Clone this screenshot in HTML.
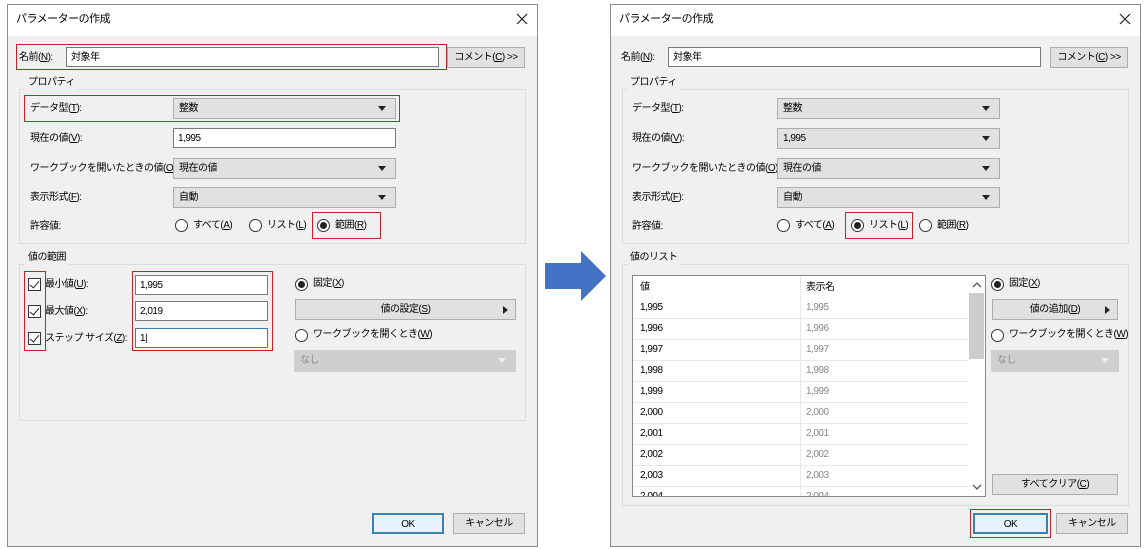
<!DOCTYPE html>
<html><head><meta charset="utf-8"><style>
*{box-sizing:border-box;margin:0;padding:0}
body{width:1148px;height:549px;background:#fff;position:relative;overflow:hidden;font-family:"Liberation Sans","Noto Sans CJK JP",sans-serif;font-size:10px;letter-spacing:-0.5px;color:#000}
.a{position:absolute}
.dlg{position:absolute;border:1px solid #8a8a8a;background:#f0f0f0}
.tb{position:absolute;left:0;top:0;right:0;height:31px;background:#fff}
.t{position:absolute;white-space:nowrap;line-height:14px}
.inp{position:absolute;background:#fff;border:1px solid #7a7a7a;height:20px;padding-left:4px;line-height:20px;white-space:nowrap}
.sel{position:absolute;background:#e1e1e1;border:1px solid #adadad;height:21px;padding-left:5px;line-height:20px;white-space:nowrap}
.sel:after{content:"";position:absolute;right:9px;top:7px;border-left:4px solid transparent;border-right:4px solid transparent;border-top:5px solid #222}
.dis{background:#cfcfcf;border-color:#cfcfcf;color:#8c8c8c}
.dis:after{border-top-color:#eee}
.btn{position:absolute;background:#e1e1e1;border:1px solid #adadad;height:21px;text-align:center;line-height:20px;white-space:nowrap}
.ar:after{content:"";position:absolute;right:7px;top:6px;border-top:4px solid transparent;border-bottom:4px solid transparent;border-left:5px solid #222}
.fs{position:absolute;border:1px solid #dcdcdc}
.lg{position:absolute;background:#f0f0f0;padding:0 3px;line-height:14px;white-space:nowrap}
.red{position:absolute;border:1px solid #c0232b}
.rad{position:absolute;width:13px;height:13px;border:1px solid #333;border-radius:50%;background:#fff}
.rad.on:after{content:"";position:absolute;left:2px;top:2px;width:7px;height:7px;border-radius:50%;background:#222}
.cb{position:absolute;width:13px;height:13px;border:1px solid #333;background:#fff}
.cb:after{content:"";position:absolute;left:3px;top:0px;width:4px;height:8px;border-right:1.3px solid #222;border-bottom:1.3px solid #222;transform:rotate(40deg)}
u{text-decoration:underline}
.row{position:absolute;left:0;width:335px;height:21px;border-bottom:1px solid #e8e8e8}
.row span{position:absolute;top:4px}
.ttl{font-size:11px}
</style></head><body>

<div class="dlg" style="left:7px;top:4px;width:531px;height:543px"><div class="tb"></div></div>
<div class="t ttl" style="left:16px;top:12px">パラメーターの作成</div>
<svg class="a" style="left:516px;top:13px" width="12" height="12"><path d="M1 1L11 11M11 1L1 11" stroke="#222" stroke-width="1.2"/></svg>

<div class="t" style="left:19px;top:51px">名前(<u>N</u>):</div>
<div class="inp" style="left:66px;top:47px;width:373px">対象年</div>
<div class="btn" style="left:447px;top:47px;width:78px">コメント(<u>C</u>) &gt;&gt;</div>
<div class="red" style="left:16px;top:44px;width:431px;height:26px"></div>

<div class="fs" style="left:19px;top:89px;width:507px;height:155px"></div>
<div class="lg" style="left:25px;top:76px">プロパティ</div>
<div class="t" style="left:30px;top:102px">データ型(<u>T</u>):</div>
<div class="sel" style="left:173px;top:98px;width:223px">整数</div>
<div class="red" style="left:24px;top:95px;width:376px;height:27px"></div>
<div class="t" style="left:30px;top:132px">現在の値(<u>V</u>):</div>
<div class="inp" style="left:173px;top:128px;width:223px">1,995</div>
<div class="t" style="left:30px;top:162px">ワークブックを開いたときの値(<u>O</u>):</div>
<div class="sel" style="left:173px;top:158px;width:223px">現在の値</div>
<div class="t" style="left:30px;top:191px">表示形式(<u>F</u>):</div>
<div class="sel" style="left:173px;top:187px;width:223px">自動</div>
<div class="t" style="left:30px;top:220px">許容値:</div>
<div class="rad" style="left:175px;top:219px"></div><div class="t" style="left:193px;top:219px">すべて(<u>A</u>)</div>
<div class="rad" style="left:249px;top:219px"></div><div class="t" style="left:267px;top:219px">リスト(<u>L</u>)</div>
<div class="rad on" style="left:317px;top:219px"></div><div class="t" style="left:335px;top:219px">範囲(<u>R</u>)</div>
<div class="red" style="left:312px;top:212px;width:69px;height:27px"></div>

<div class="fs" style="left:19px;top:264px;width:507px;height:157px"></div>
<div class="lg" style="left:25px;top:251px">値の範囲</div>
<div class="cb" style="left:28px;top:278px"></div><div class="t" style="left:45px;top:278px">最小値(<u>U</u>):</div>
<div class="cb" style="left:28px;top:305px"></div><div class="t" style="left:45px;top:305px">最大値(<u>X</u>):</div>
<div class="cb" style="left:28px;top:332px"></div><div class="t" style="left:45px;top:332px">ステップ サイズ(<u>Z</u>):</div>
<div class="red" style="left:24px;top:271px;width:22px;height:80px"></div>
<div class="inp" style="left:135px;top:275px;width:133px">1,995</div>
<div class="inp" style="left:135px;top:301px;width:133px">2,019</div>
<div class="inp" style="left:135px;top:328px;width:133px;border-color:#3c7fb1">1|</div>
<div class="red" style="left:132px;top:271px;width:141px;height:80px"></div>
<div class="rad on" style="left:295px;top:278px"></div><div class="t" style="left:313px;top:277px">固定(<u>X</u>)</div>
<div class="btn ar" style="left:295px;top:299px;width:221px">値の設定(<u>S</u>)</div>
<div class="rad" style="left:295px;top:329px"></div><div class="t" style="left:313px;top:328px">ワークブックを開くとき(<u>W</u>)</div>
<div class="sel dis" style="left:294px;top:350px;width:222px;height:22px">なし</div>

<div class="btn" style="left:372px;top:513px;width:72px;border:2px solid #3c7fb1;background:#e5f1fb">OK</div>
<div class="btn" style="left:453px;top:513px;width:72px">キャンセル</div>

<svg class="a" style="left:544px;top:250px" width="64" height="52"><polygon points="1,13 37,13 37,1 62,26 37,51 37,39 1,39" fill="#4472c4"/></svg>

<div class="dlg" style="left:610px;top:4px;width:531px;height:543px"><div class="tb"></div></div>
<div class="t ttl" style="left:619px;top:12px">パラメーターの作成</div>
<svg class="a" style="left:1119px;top:13px" width="12" height="12"><path d="M1 1L11 11M11 1L1 11" stroke="#222" stroke-width="1.2"/></svg>

<div class="t" style="left:621px;top:51px">名前(<u>N</u>):</div>
<div class="inp" style="left:668px;top:47px;width:373px">対象年</div>
<div class="btn" style="left:1050px;top:47px;width:78px">コメント(<u>C</u>) &gt;&gt;</div>

<div class="fs" style="left:622px;top:89px;width:507px;height:155px"></div>
<div class="lg" style="left:627px;top:76px">プロパティ</div>
<div class="t" style="left:632px;top:102px">データ型(<u>T</u>):</div>
<div class="sel" style="left:777px;top:98px;width:223px">整数</div>
<div class="t" style="left:632px;top:132px">現在の値(<u>V</u>):</div>
<div class="sel" style="left:777px;top:128px;width:223px">1,995</div>
<div class="t" style="left:632px;top:162px">ワークブックを開いたときの値(<u>O</u>):</div>
<div class="sel" style="left:777px;top:158px;width:223px">現在の値</div>
<div class="t" style="left:632px;top:191px">表示形式(<u>F</u>):</div>
<div class="sel" style="left:777px;top:187px;width:223px">自動</div>
<div class="t" style="left:632px;top:220px">許容値:</div>
<div class="rad" style="left:777px;top:219px"></div><div class="t" style="left:795px;top:219px">すべて(<u>A</u>)</div>
<div class="rad on" style="left:851px;top:219px"></div><div class="t" style="left:869px;top:219px">リスト(<u>L</u>)</div>
<div class="rad" style="left:919px;top:219px"></div><div class="t" style="left:937px;top:219px">範囲(<u>R</u>)</div>
<div class="red" style="left:845px;top:212px;width:68px;height:27px"></div>

<div class="fs" style="left:622px;top:264px;width:507px;height:242px"></div>
<div class="lg" style="left:627px;top:251px">値のリスト</div>
<div class="a" style="left:632px;top:275px;width:354px;height:222px;background:#fff;border:1px solid #828790;overflow:hidden">
 <div class="a" style="left:167px;top:0;width:1px;height:222px;background:#e8e8e8"></div>
 <div class="t" style="left:7px;top:5px">値</div><div class="t" style="left:173px;top:5px">表示名</div>
 <div class="row" style="top:22px"><span style="left:7px">1,995</span><span style="left:173px;color:#888">1,995</span></div>
 <div class="row" style="top:43px"><span style="left:7px">1,996</span><span style="left:173px;color:#888">1,996</span></div>
 <div class="row" style="top:64px"><span style="left:7px">1,997</span><span style="left:173px;color:#888">1,997</span></div>
 <div class="row" style="top:85px"><span style="left:7px">1,998</span><span style="left:173px;color:#888">1,998</span></div>
 <div class="row" style="top:106px"><span style="left:7px">1,999</span><span style="left:173px;color:#888">1,999</span></div>
 <div class="row" style="top:127px"><span style="left:7px">2,000</span><span style="left:173px;color:#888">2,000</span></div>
 <div class="row" style="top:148px"><span style="left:7px">2,001</span><span style="left:173px;color:#888">2,001</span></div>
 <div class="row" style="top:169px"><span style="left:7px">2,002</span><span style="left:173px;color:#888">2,002</span></div>
 <div class="row" style="top:190px"><span style="left:7px">2,003</span><span style="left:173px;color:#888">2,003</span></div>
 <div class="row" style="top:211px"><span style="left:7px">2,004</span><span style="left:173px;color:#888">2,004</span></div>
 <div class="a" style="left:335px;top:0;width:17px;height:220px;background:#fff"></div>
 <div class="a" style="left:336px;top:17px;width:15px;height:66px;background:#cdcdcd"></div>
 <svg class="a" style="left:339px;top:6px" width="10" height="6"><path d="M1 5L5 1L9 5" stroke="#555" fill="none" stroke-width="1.3"/></svg>
 <svg class="a" style="left:339px;top:208px" width="10" height="6"><path d="M1 1L5 5L9 1" stroke="#555" fill="none" stroke-width="1.3"/></svg>
</div>
<div class="rad on" style="left:991px;top:278px"></div><div class="t" style="left:1009px;top:277px">固定(<u>X</u>)</div>
<div class="btn ar" style="left:992px;top:299px;width:126px">値の追加(<u>D</u>)</div>
<div class="rad" style="left:991px;top:329px"></div><div class="t" style="left:1009px;top:328px">ワークブックを開くとき(<u>W</u>)</div>
<div class="sel dis" style="left:991px;top:350px;width:128px;height:22px">なし</div>
<div class="btn" style="left:992px;top:474px;width:126px">すべてクリア(<u>C</u>)</div>

<div class="btn" style="left:973px;top:513px;width:75px;border:2px solid #3c7fb1;background:#e5f1fb">OK</div>
<div class="red" style="left:970px;top:509px;width:81px;height:29px"></div>
<div class="btn" style="left:1056px;top:513px;width:72px">キャンセル</div>

</body></html>
